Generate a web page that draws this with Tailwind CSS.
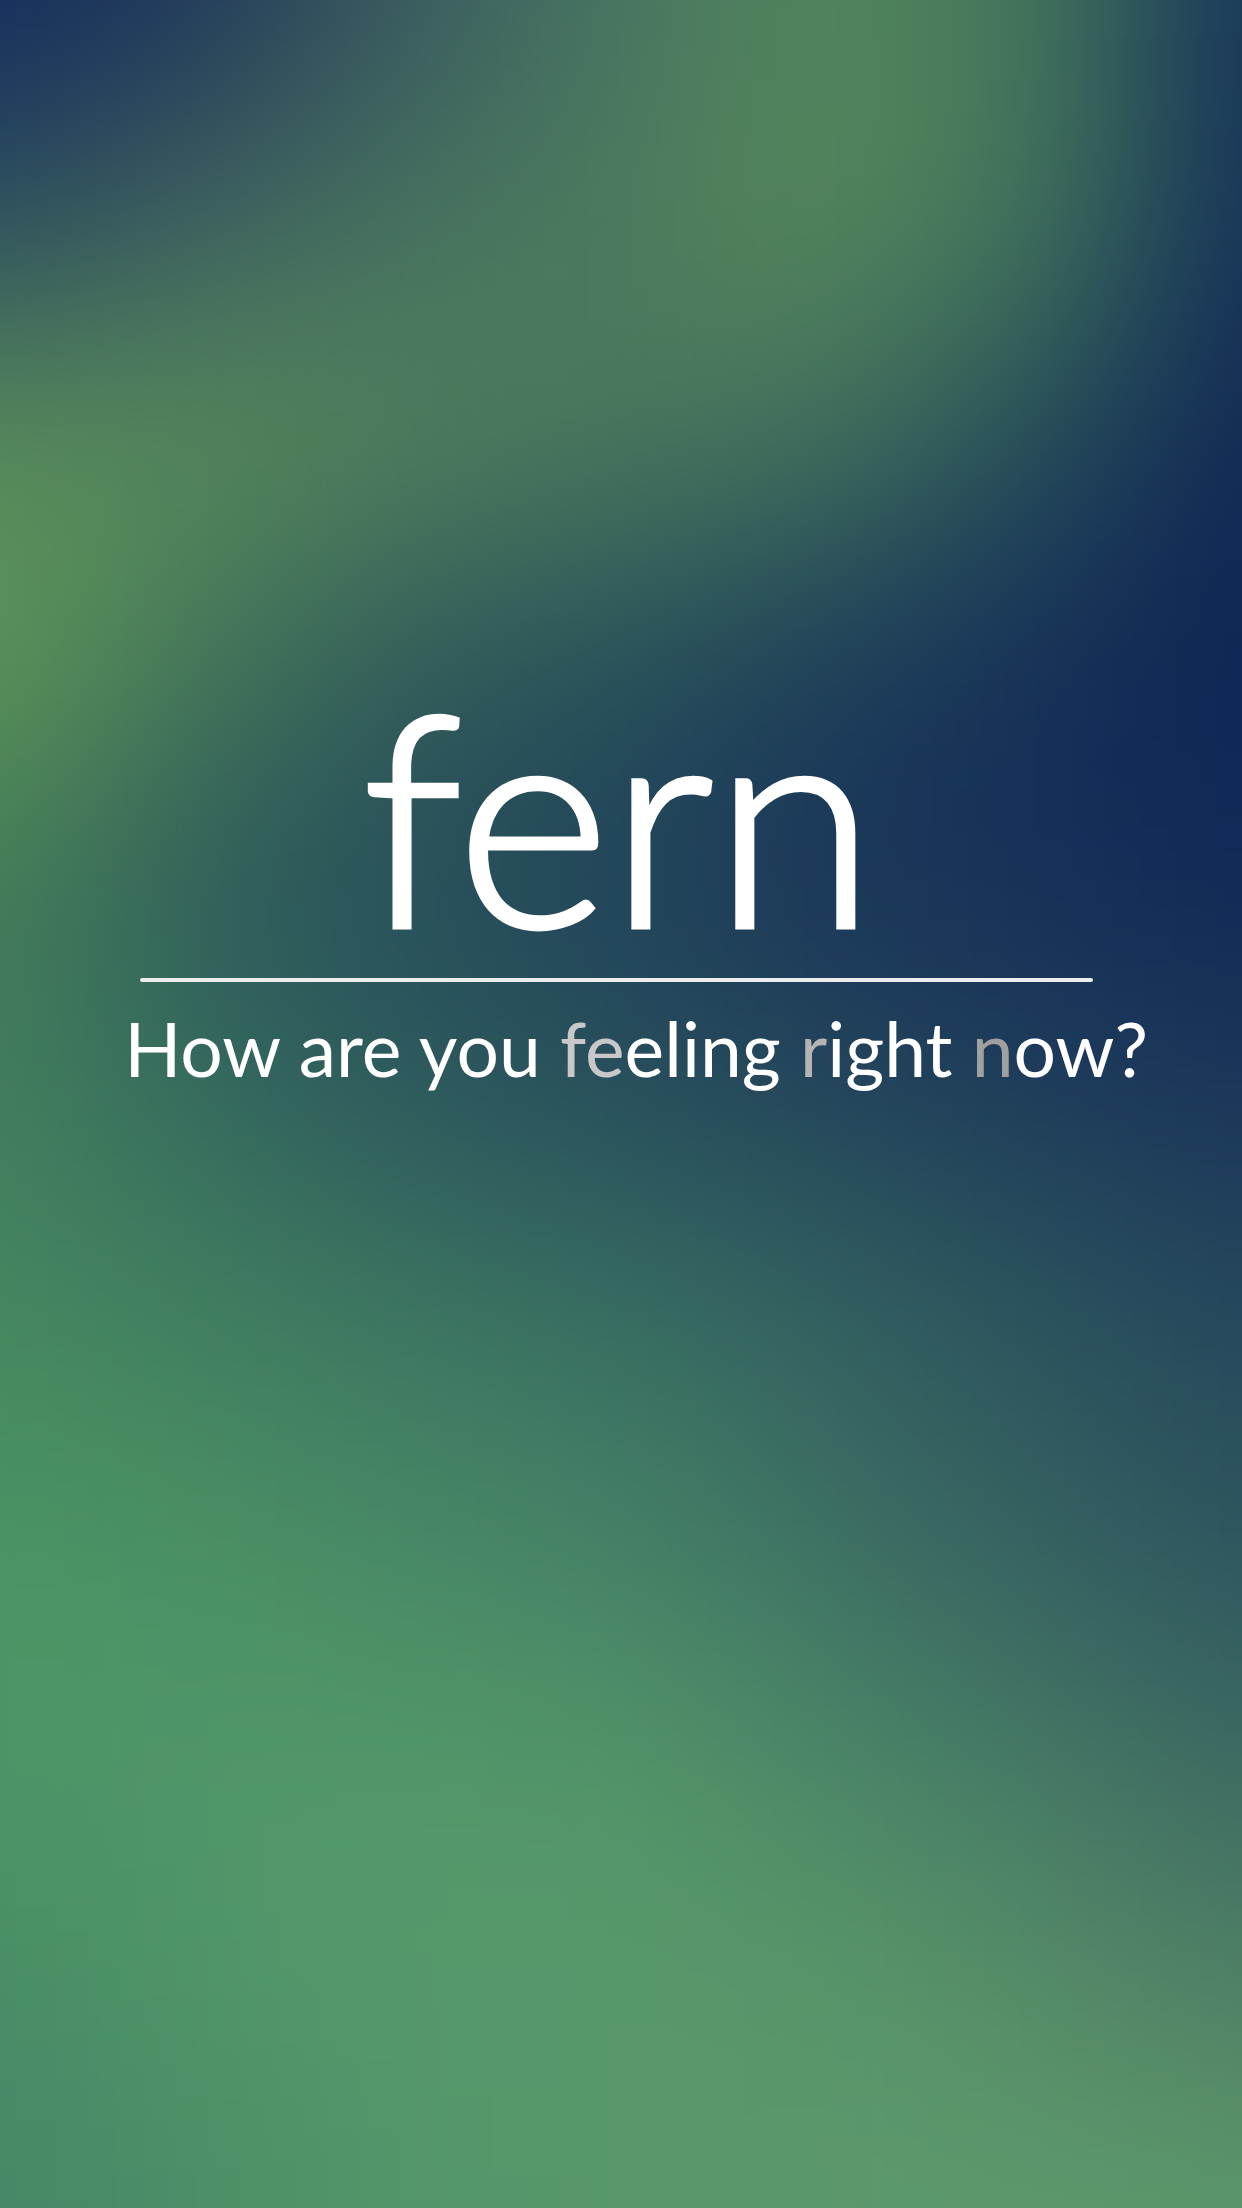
<!DOCTYPE html>
<html lang="en">
<head>
<meta charset="utf-8">
<meta name="viewport" content="width=device-width, initial-scale=1">
<title>fern</title>
<script src="https://cdn.jsdelivr.net/npm/@tailwindcss/browser@4"></script>
</head>
<body class="bg-[#2d5c5a] font-['Lato',sans-serif] text-white">
<main class="relative isolate flex min-h-screen flex-col overflow-hidden pt-[650px] pr-[11%] pl-[10%]">
  <svg id="backdrop" class="absolute inset-0 -z-10 h-full w-full" viewBox="0 0 6 10" preserveAspectRatio="none" aria-hidden="true">
    <defs>
      <filter id="soften" filterUnits="userSpaceOnUse" x="-3" y="-3" width="12" height="16" color-interpolation-filters="sRGB">
        <feGaussianBlur stdDeviation="0.5"/>
      </filter>
    </defs>
    <g id="mesh" filter="url(#soften)"></g>
  </svg>
  <h1 class="pl-2 text-center text-[294px] leading-[328px] font-light [-webkit-text-stroke:5px_white]">fern</h1>
  <hr class="mr-3 ml-4 h-1 rounded-full border-0 bg-[#ededed]">
  <p class="mt-6 text-[75px] leading-[84px] whitespace-nowrap">How are you <span class="text-[#c8c8c8]">fe</span>eling <span class="text-[#b4b4b4]">r</span>ight <span class="text-[#a0a0a0]">n</span>ow?</p>
</main>
<script>
  // Colour mesh of the backdrop, one row per tenth of its height.
  const mesh = [
    '122b5f 203859 3a5b60 487562 52865c 46775b 15325a',
    '2e505e 40625f 47735f 4d7a5d 56895c 43755b 143058',
    '5a8c5b 568a5b 507f5c 4a775c 42705c 264c59 0f2755',
    '5c9758 447559 30595a 27505a 1d3d59 142f58 0d2554',
    '447c58 2d5c5a 274f5a 21435a 1a3558 15305a 112956',
    '427f5d 34695e 2d595d 284f5c 24465b 1f3d5a 1a365a',
    '468860 41805f 3d7661 387062 346260 2c545d 26485c',
    '4c9464 4b9065 488966 458166 3d7064 366060 2d545f',
    '4e9466 52976a 529769 549669 4b8767 447a65 3d6961',
    '488c66 50946a 56996b 58996b 599769 568c68 4f7f65',
    '468666 4b8e68 53966a 58986a 5c986c 5d9a6c 5c986b'
  ].map(row => row.split(' '));
  const group = document.getElementById('mesh');
  for (let y = -2; y <= 12; y++) {
    for (let x = -2; x <= 8; x++) {
      const cell = document.createElementNS('http://www.w3.org/2000/svg', 'rect');
      const row = mesh[Math.min(10, Math.max(0, y))];
      cell.setAttribute('x', x - 0.5);
      cell.setAttribute('y', y - 0.5);
      cell.setAttribute('width', 1.02);
      cell.setAttribute('height', 1.02);
      cell.setAttribute('fill', '#' + row[Math.min(6, Math.max(0, x))]);
      group.appendChild(cell);
    }
  }
</script>
</body>
</html>
